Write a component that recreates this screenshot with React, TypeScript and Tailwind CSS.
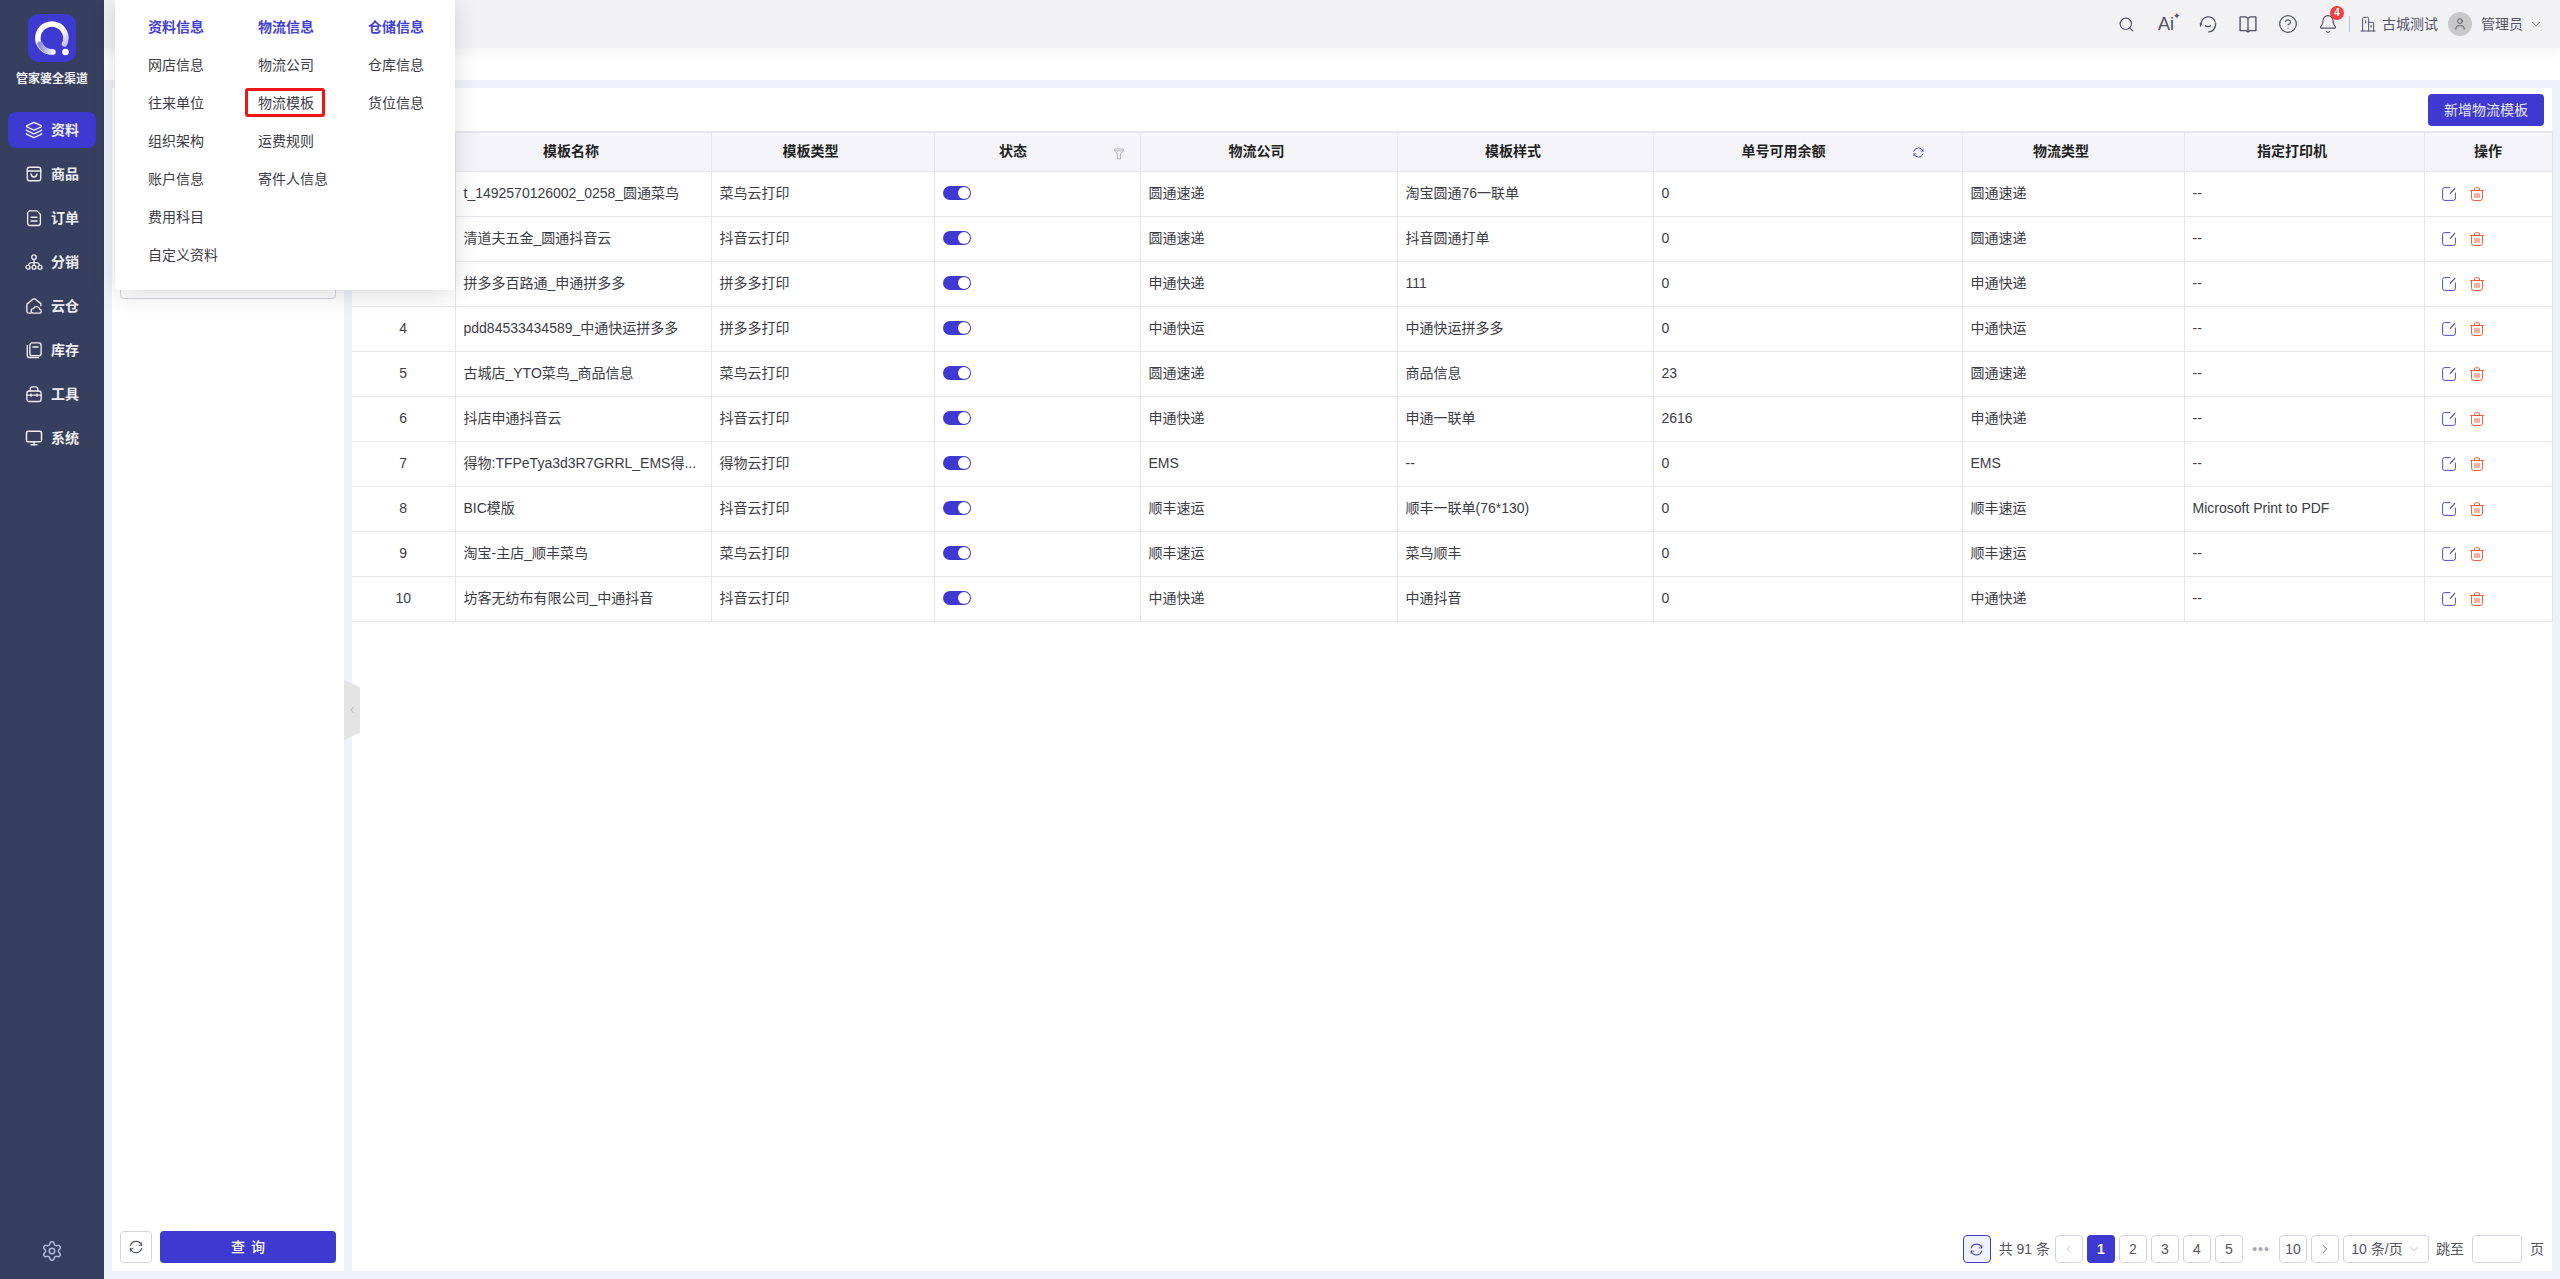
import React from "react";
import { Search, Layers, Monitor, Settings, CircleHelp, Bell, ChevronDown, ChevronLeft, ChevronRight, User } from "lucide-react";

type IconProps = { className?: string };
const base = { fill: "none", stroke: "currentColor", strokeWidth: 1.8, strokeLinecap: "round" as const, strokeLinejoin: "round" as const };

const RefreshIcon = ({ className }: IconProps) => (
  <svg viewBox="0 0 24 24" className={className} {...base}>
    <path d="M20.500 9.500A9 9 0 0 0 3.500 9.500M3.500 14.500a9 9 0 0 0 17 0" />
    <path d="M20.500 5.500v4h-4M3.500 18.500v-4h4" strokeWidth={1.4} />
  </svg>
);
const GoodsIcon = ({ className }: IconProps) => (
  <svg viewBox="0 0 24 24" className={className} {...base}>
    <rect x="3" y="3" width="18" height="18" rx="3" />
    <path d="M3 8h18M8 12c.6 3 2.2 4 4 4s3.4-1 4-4" />
  </svg>
);
const OrderIcon = ({ className }: IconProps) => (
  <svg viewBox="0 0 24 24" className={className} {...base}>
    <path d="M8 2.5h8l4.5 4.5v12a3 3 0 0 1-3 3h-11a3 3 0 0 1-3-3v-13a3.5 3.5 0 0 1 4.5-3.5z" />
    <path d="M8 11h8M8 16h8" />
  </svg>
);
const NetworkIcon = ({ className }: IconProps) => (
  <svg viewBox="0 0 24 24" className={className} {...base}>
    <circle cx="12" cy="5.5" r="3" />
    <circle cx="4" cy="19" r="2.6" />
    <circle cx="12" cy="19" r="2.6" />
    <circle cx="20" cy="19" r="2.6" />
    <path d="M12 8.5v8M4.5 16.4c.5-2.6 2.5-3.9 7.5-3.9s7 1.300 7.500 3.900" />
  </svg>
);
const CloudHomeIcon = ({ className }: IconProps) => (
  <svg viewBox="0 0 24 24" className={className} {...base}>
    <path d="M8 21.500H5a2.500 2.500 0 0 1-2.500-2.500V9.500L11 2.700a2 2 0 0 1 2.400 0l7.800 6.100v3" />
    <path d="M11 21.500a3 3 0 0 1 .3-6 4.300 4.300 0 0 1 8.200.8 2.700 2.700 0 0 1 .5 5.200z" />
  </svg>
);
const StockIcon = ({ className }: IconProps) => (
  <svg viewBox="0 0 24 24" className={className} {...base}>
    <rect x="6.500" y="2.500" width="15" height="17" rx="3" />
    <path d="M10.500 8h7M3 6v13a3 3 0 0 0 3 3h12" />
  </svg>
);
const ToolIcon = ({ className }: IconProps) => (
  <svg viewBox="0 0 24 24" className={className} {...base}>
    <rect x="2.500" y="8" width="19" height="14" rx="3" />
    <path d="M7 8V5a2.500 2.500 0 0 1 2.500-2.500h5A2.500 2.500 0 0 1 17 5v3M2.500 13.500h19M8 12v3M16 12v3" />
  </svg>
);
const HeadsetIcon = ({ className }: IconProps) => (
  <svg viewBox="0 0 24 24" className={className} {...base} strokeWidth={1.6}>
    <path d="M4 12a8.500 8.500 0 0 1 16.500-3M20.500 15a8.500 8.500 0 0 1-7.500 6.500" />
    <path d="M3 11v3.500M21 11v3.500M9 14c1.500 1.500 4.500 1.500 6 0" />
  </svg>
);
const BookIcon = ({ className }: IconProps) => (
  <svg viewBox="0 0 24 24" className={className} {...base} strokeWidth={1.6}>
    <path d="M2.500 3.500h7L12 5.500l2.500-2h7v16.500h-7L12 21.500 9.500 20h-7zM12 5.500v16" />
  </svg>
);
const BuildingIcon = ({ className }: IconProps) => (
  <svg viewBox="0 0 24 24" className={className} {...base} strokeWidth={1.5}>
    <path d="M1.500 22.500h21M4 22.500V3.500a1.500 1.500 0 0 1 1.500-1.500h6A1.500 1.500 0 0 1 13 3.500v19M13 9.500h6a1.500 1.500 0 0 1 1.500 1.500v11.500M8.500 7v3.500M16.500 14v3" />
  </svg>
);
const EditIcon = ({ className }: IconProps) => (
  <svg viewBox="0 0 14 14" className={className} fill="none" stroke="currentColor" strokeWidth={1} strokeLinecap="round">
    <path d="M8 .6H2.600a2 2 0 0 0-2 2v8.800a2 2 0 0 0 2 2h8.800a2 2 0 0 0 2-2V6" />
    <path d="M12.800 1.400 8.300 6.400" strokeWidth={1.200} />
  </svg>
);
const TrashIcon = ({ className }: IconProps) => (
  <svg viewBox="0 0 14 14" className={className} fill="none" stroke="currentColor" strokeWidth={1} strokeLinecap="round">
    <path d="M.5 3.500h13M4.500 3.500V1.800a1 1 0 0 1 1-1h3a1 1 0 0 1 1 1v1.700" />
    <path d="M1.500 3.500v7.500a2.500 2.500 0 0 0 2.500 2.500h6a2.500 2.500 0 0 0 2.500-2.500V3.500M5 6.500v4M7 6.500v4M9 6.500v4" />
  </svg>
);
const FilterIcon = ({ className }: IconProps) => (
  <svg viewBox="0 0 12 14" className={className} fill="none" stroke="currentColor" strokeWidth={1}>
    <path d="M.8 1h10.400v2.200L7.800 7v6H4.200V7L.8 3.200zM.8 3.200h10.400" />
  </svg>
);
const Logo = () => (
  <svg viewBox="0 0 48 48" className="w-12 h-12">
    <defs>
      <linearGradient id="q" x1="0" y1="0" x2="1" y2="1">
        <stop offset="0" stopColor="#ffffff" />
        <stop offset="0.55" stopColor="#ffffff" />
        <stop offset="1" stopColor="#a9a6ea" />
      </linearGradient>
      <linearGradient id="qb" x1="0" y1="0" x2="1" y2="0">
        <stop offset="0" stopColor="#8f8ce6" />
        <stop offset="1" stopColor="#f4f4ff" />
      </linearGradient>
    </defs>
    <rect width="48" height="48" rx="10" fill="#3d39d1" />
    <path d="M36.500 30A14 14 0 1 0 24.500 38" fill="none" stroke="url(#q)" strokeWidth="5.500" strokeLinecap="round" />
    <path d="M12 30a14 14 0 0 0 13 8" fill="none" stroke="url(#qb)" strokeWidth="5.500" strokeLinecap="round" />
    <circle cx="37.500" cy="38" r="3.300" fill="#fff" />
  </svg>
);

const navItems = [
  { label: "资料", Icon: Layers, active: true },
  { label: "商品", Icon: GoodsIcon },
  { label: "订单", Icon: OrderIcon },
  { label: "分销", Icon: NetworkIcon },
  { label: "云仓", Icon: CloudHomeIcon },
  { label: "库存", Icon: StockIcon },
  { label: "工具", Icon: ToolIcon },
  { label: "系统", Icon: Monitor },
];

const menu = [
  { title: "资料信息", items: ["网店信息", "往来单位", "组织架构", "账户信息", "费用科目", "自定义资料"] },
  { title: "物流信息", items: ["物流公司", "物流模板", "运费规则", "寄件人信息"] },
  { title: "仓储信息", items: ["仓库信息", "货位信息"] },
];

const rows = [
  ["1", "t_1492570126002_0258_圆通菜鸟", "菜鸟云打印", "圆通速递", "淘宝圆通76一联单", "0", "圆通速递", "--"],
  ["2", "清道夫五金_圆通抖音云", "抖音云打印", "圆通速递", "抖音圆通打单", "0", "圆通速递", "--"],
  ["3", "拼多多百路通_申通拼多多", "拼多多打印", "申通快递", "111", "0", "申通快递", "--"],
  ["4", "pdd84533434589_中通快运拼多多", "拼多多打印", "中通快运", "中通快运拼多多", "0", "中通快运", "--"],
  ["5", "古城店_YTO菜鸟_商品信息", "菜鸟云打印", "圆通速递", "商品信息", "23", "圆通速递", "--"],
  ["6", "抖店申通抖音云", "抖音云打印", "申通快递", "申通一联单", "2616", "申通快递", "--"],
  ["7", "得物:TFPeTya3d3R7GRRL_EMS得...", "得物云打印", "EMS", "--", "0", "EMS", "--"],
  ["8", "BIC模版", "抖音云打印", "顺丰速运", "顺丰一联单(76*130)", "0", "顺丰速运", "Microsoft Print to PDF"],
  ["9", "淘宝-主店_顺丰菜鸟", "菜鸟云打印", "顺丰速运", "菜鸟顺丰", "0", "顺丰速运", "--"],
  ["10", "坊客无纺布有限公司_中通抖音", "抖音云打印", "中通快递", "中通抖音", "0", "中通快递", "--"],
];

const widths = [103, 256, 223, 206, 257, 256, 309, 222, 240, 128];
const headers = ["序号", "模板名称", "模板类型", "状态", "物流公司", "模板样式", "单号可用余额", "物流类型", "指定打印机", "操作"];

const thClass = "relative border-r border-b border-[#e6e6ec] text-center font-bold text-[14px] text-[#1f1f1f] bg-[#f5f5f9]";
const tdClass = "border-r border-b border-[#e6e6ec] px-2 pb-px text-[14px] text-[#3c3c44] whitespace-nowrap overflow-hidden";
const pageBtn = "w-7 h-7 flex items-center justify-center rounded-[4px] border border-[#d5d5e0] text-[14px] text-[#555560] bg-white";

function headerPad(h: string) {
  if (h === "操作") return "";
  if (h === "状态" || h === "单号可用余额") return "pr-12";
  return "pr-6";
}

export default function App() {
  return (
    <div className="relative flex w-screen h-screen overflow-hidden bg-[#eff1fd] font-['Liberation_Sans','Noto_Sans_CJK_SC',sans-serif]">
      {/* Sidebar */}
      <aside className="w-[104px] shrink-0 h-full bg-[#373f5f] flex flex-col items-center">
        <div className="mt-[14px]"><Logo /></div>
        <div className="mt-[9px] text-[12px] leading-4 font-bold text-[#f2f2f5] whitespace-nowrap">管家婆全渠道</div>
        <nav className="mt-[25px] w-full flex flex-col">
          {navItems.map(({ label, Icon, active }) => (
            <div key={label} className="h-11 flex items-start">
              <div className={`mx-2 w-[88px] h-9 rounded-lg flex items-center pl-[17px] gap-2 text-[14px] font-bold text-[#eeeef4] ${active ? "bg-[#3d39d1]" : ""}`}>
                <Icon className="w-[18px] h-[18px]" />
                <span>{label}</span>
              </div>
            </div>
          ))}
        </nav>
        <div className="mt-auto mb-[17px] text-[#b4bbdc]"><Settings className="w-[22px] h-[22px]" strokeWidth={1.6} /></div>
      </aside>

      {/* Main */}
      <div className="flex-1 min-w-0 flex flex-col">
        <header className="relative z-10 h-12 shrink-0 bg-[#f2f2f5] shadow-[0_6px_10px_rgba(0,0,0,0.04)] flex items-center justify-end pr-[17px] text-[#50506a]">
          <Search className="w-[17px] h-[17px] mr-[23px]" strokeWidth={1.6} />
          <div className="relative w-5 mr-[20px] text-[18px] leading-none">
            Ai
            <span className="absolute -top-[3px] -right-[3px] text-[9px] leading-none">✦</span>
          </div>
          <HeadsetIcon className="w-5 h-5 mr-5" />
          <BookIcon className="w-5 h-5 mr-5" />
          <CircleHelp className="w-5 h-5 mr-5" strokeWidth={1.4} />
          <div className="relative mr-[11px]">
            <Bell className="w-5 h-5" strokeWidth={1.4} />
            <span className="absolute -top-2 -right-[6px] w-[14px] h-[14px] rounded-full bg-[#f44040] text-white text-[10px] font-bold leading-[14px] text-center">4</span>
          </div>
          <div className="w-px h-4 bg-[#b9bfe0] mr-[10px]" />
          <BuildingIcon className="w-4 h-4 mr-[6px]" />
          <span className="text-[14px] mr-[10px] text-[#55556a]">古城测试</span>
          <div className="w-6 h-6 rounded-full bg-[#c9c9c9] flex items-center justify-center mr-[9px]">
            <User className="w-[14px] h-[14px] text-[#4a4a55]" strokeWidth={1.5} />
          </div>
          <span className="text-[14px] mr-[6px] text-[#55556a]">管理员</span>
          <ChevronDown className="w-[14px] h-[14px]" strokeWidth={1.3} />
        </header>
        <div className="h-8 shrink-0 bg-white" />

        <div className="flex-1 min-h-0 flex pt-2 pb-2 pl-2 pr-2 gap-2">
          {/* Filter panel */}
          <section className="relative w-[232px] shrink-0 bg-white flex flex-col px-2">
            <div className="mt-[179px] h-8 rounded border border-[#d5d5e0]" />
            <div className="mt-auto mb-2 flex gap-2">
              <button className="w-8 h-8 rounded border border-[#d5d5e0] flex items-center justify-center text-[#555570]">
                <RefreshIcon className="w-4 h-4" />
              </button>
              <button className="flex-1 h-8 rounded bg-[#3d39d1] text-white text-[14px] font-medium tracking-[6px] pl-[6px]">查询</button>
            </div>
            <div className="absolute left-[232px] top-[592px] w-4 h-[60px] bg-[#e3e3e3] text-[#9a9a9a] flex items-center justify-center [clip-path:polygon(0_0,100%_12%,100%_88%,0_100%)]">
              <ChevronLeft className="w-[10px] h-[14px]" strokeWidth={1.5} />
            </div>
          </section>

          {/* Table panel */}
          <section className="flex-1 min-w-0 bg-white flex flex-col">
            <div className="h-[43px] shrink-0 flex justify-end items-start pt-[6px] pr-2">
              <button className="h-8 w-[116px] rounded bg-[#3d39d1] text-[#e9e9fb] text-[14px]">新增物流模板</button>
            </div>
            <table className="w-[2200px] table-fixed border-collapse border-t-2 border-[#e6e6ec]">
              <colgroup>
                {widths.map((w, i) => <col key={i} style={{ width: w }} />)}
              </colgroup>
              <thead>
                <tr className="h-[39px]">
                  {headers.map((h) => (
                    <th key={h} className={`${thClass} ${headerPad(h)}`}>
                      {h}
                      {h === "状态" && <FilterIcon className="absolute right-[16px] top-[15px] w-[10px] h-[12px] text-[#a8a8b0]" />}
                      {h === "单号可用余额" && <RefreshIcon className="absolute right-[37px] top-[13px] w-[13px] h-[13px] text-[#4d49d8]" />}
                    </th>
                  ))}
                </tr>
              </thead>
              <tbody>
                {rows.map((r) => (
                  <tr key={r[0]} className="h-[45px]">
                    <td className={`${tdClass} text-center`}>{r[0]}</td>
                    <td className={tdClass}>{r[1]}</td>
                    <td className={tdClass}>{r[2]}</td>
                    <td className={tdClass}>
                      <div className="w-7 h-[14px] rounded-full bg-[#3d39d1] flex items-center justify-end pr-[1px]">
                        <div className="w-3 h-3 rounded-full bg-white" />
                      </div>
                    </td>
                    <td className={tdClass}>{r[3]}</td>
                    <td className={tdClass}>{r[4]}</td>
                    <td className={tdClass}>{r[5]}</td>
                    <td className={tdClass}>{r[6]}</td>
                    <td className={tdClass}>{r[7]}</td>
                    <td className="border-r border-b border-[#e6e6ec] pl-[17px]">
                      <div className="flex gap-[14px]">
                        <EditIcon className="w-[14px] h-[14px] text-[#4d49d8]" />
                        <TrashIcon className="w-[14px] h-[14px] text-[#f4613f]" />
                      </div>
                    </td>
                  </tr>
                ))}
              </tbody>
            </table>

            <div className="mt-auto mb-2 pr-2 flex items-center justify-end gap-1 text-[14px] text-[#555560]">
              <div className="w-7 h-7 mr-1 flex items-center justify-center rounded-[4px] border border-[#3d39d1] bg-[#eff1fd] text-[#4d49d8]">
                <RefreshIcon className="w-[15px] h-[15px]" />
              </div>
              <span className="mr-px whitespace-nowrap">共 91 条</span>
              <div className={`${pageBtn} text-[#c4c4cc]`}><ChevronLeft className="w-[14px] h-[14px] text-[#c4c4cc]" strokeWidth={1.4} /></div>
              <div className="w-7 h-7 flex items-center justify-center rounded-[4px] bg-[#3d39d1] text-white font-bold">1</div>
              <div className={pageBtn}>2</div>
              <div className={pageBtn}>3</div>
              <div className={pageBtn}>4</div>
              <div className={pageBtn}>5</div>
              <div className="w-7 text-center text-[#a8a8b4] tracking-[1px] whitespace-nowrap">•••</div>
              <div className={pageBtn}>10</div>
              <div className={pageBtn}><ChevronRight className="w-[14px] h-[14px]" strokeWidth={1.4} /></div>
              <div className="w-[86px] h-7 flex items-center justify-center gap-1 rounded-[4px] border border-[#d5d5e0] whitespace-nowrap">
                10 条/页<ChevronDown className="w-[14px] h-[14px] text-[#b0b0bc]" strokeWidth={1.3} />
              </div>
              <span className="ml-[3px] mr-[4px] whitespace-nowrap">跳至</span>
              <div className="w-[50px] h-7 rounded-[4px] border border-[#d5d5e0]" />
              <span className="ml-[4px]">页</span>
            </div>
          </section>
        </div>
      </div>

      {/* Dropdown menu */}
      <div className="absolute left-[115px] top-0 z-20 w-[340px] h-[290px] bg-white rounded-b shadow-[0_4px_24px_rgba(0,0,0,0.14)] flex pl-[33px] pt-2 text-[14px]">
        {menu.map((col) => (
          <div key={col.title} className="w-[110px] shrink-0 flex flex-col">
            <div className="h-[38px] flex items-center font-bold text-[#4340d4] whitespace-nowrap">{col.title}</div>
            {col.items.map((it) => (
              <div key={it} className="relative h-[38px] flex items-center text-[#3c3c44] whitespace-nowrap">
                {it}
                {it === "物流模板" && <div className="absolute -left-[13px] top-1 w-20 h-[29px] rounded-[3px] border-[3px] border-[#f01414]" />}
              </div>
            ))}
          </div>
        ))}
      </div>
    </div>
  );
}
